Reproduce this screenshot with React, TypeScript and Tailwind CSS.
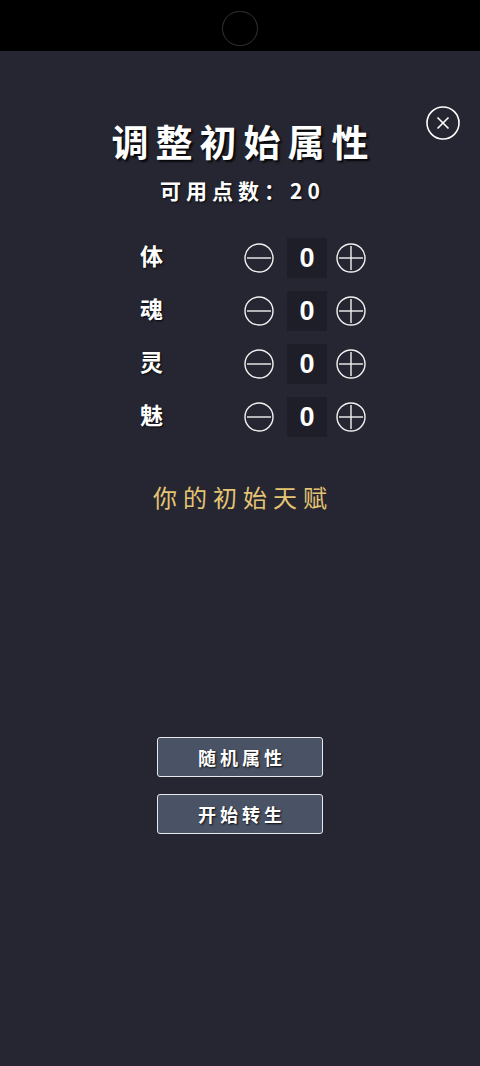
const stats = ["体", "魂", "灵", "魅"];

const Minus = () => (
  <svg width="30" height="30" viewBox="0 0 30 30" fill="none" stroke="#f2f2f2" strokeWidth="1.4">
    <circle cx="15" cy="15" r="14" />
    <line x1="3" y1="15" x2="27" y2="15" />
  </svg>
);

const Plus = () => (
  <svg width="30" height="30" viewBox="0 0 30 30" fill="none" stroke="#f2f2f2" strokeWidth="1.4">
    <circle cx="15" cy="15" r="14" />
    <line x1="3" y1="15" x2="27" y2="15" />
    <line x1="15" y1="3" x2="15" y2="27" />
  </svg>
);

export default function App() {
  return (
    <div
      className="w-[480px] h-[1066px] bg-[#252631] flex flex-col"
      style={{ fontFamily: '"Noto Sans CJK SC", "Noto Sans", sans-serif' }}
    >
      <div className="h-[51px] bg-black flex justify-center pt-[11px] shrink-0">
        <div className="w-[36px] h-[35px] rounded-full border-[1.5px] border-[#333]" />
      </div>

      <div className="relative flex-1 flex flex-col items-center">
        <button className="absolute left-[426px] top-[55px] w-[34px] h-[34px]">
          <svg width="34" height="34" viewBox="0 0 34 34" fill="none" stroke="#fff" strokeWidth="1.6">
            <circle cx="17" cy="17" r="16" />
            <line x1="11.5" y1="11.5" x2="22.5" y2="22.5" />
            <line x1="22.5" y1="11.5" x2="11.5" y2="22.5" />
          </svg>
        </button>

        <h1 className="mt-[64px] text-[37px] leading-[52px] font-bold text-white tracking-[7px] pl-[7px] [text-shadow:2px_2px_2px_rgba(0,0,0,0.85)]">
          调整初始属性
        </h1>
        <div className="mt-[9px] text-[21px] leading-[28px] font-bold text-white tracking-[5px] pl-[5px] [text-shadow:1px_1px_2px_rgba(0,0,0,0.85)]">
          可用点数：20
        </div>

        <div className="mt-[34px] self-start ml-[140px] flex flex-col gap-[13px]">
          {stats.map((s) => (
            <div key={s} className="flex items-center h-[40px]">
              <div className="w-[104px] text-[23px] font-bold text-white -mt-[6px] [text-shadow:1px_1px_2px_rgba(0,0,0,0.85)]">
                {s}
              </div>
              <Minus />
              <div
                className="ml-[13px] w-[40px] h-[40px] bg-[#1d1e27] flex items-center justify-center text-[27px] font-bold text-white"
                style={{ fontFamily: '"Liberation Sans", sans-serif' }}
              >
                0
              </div>
              <div className="ml-[9px]">
                <Plus />
              </div>
            </div>
          ))}
        </div>

        <div className="mt-[43px] text-[24px] leading-[34px] text-[#e4c473] tracking-[6px] pl-[6px]">
          你的初始天赋
        </div>

        <div className="mt-[223px] flex flex-col gap-[17px]">
          <button className="w-[166px] h-[40px] bg-[#4a5265] border border-[#e8e8ee] rounded-[3px] text-white font-bold text-[18px] tracking-[4px] pl-[4px] [text-shadow:1px_1px_2px_rgba(0,0,0,0.85)]">
            随机属性
          </button>
          <button className="w-[166px] h-[40px] bg-[#4a5265] border border-[#e8e8ee] rounded-[3px] text-white font-bold text-[18px] tracking-[4px] pl-[4px] [text-shadow:1px_1px_2px_rgba(0,0,0,0.85)]">
            开始转生
          </button>
        </div>
      </div>
    </div>
  );
}
